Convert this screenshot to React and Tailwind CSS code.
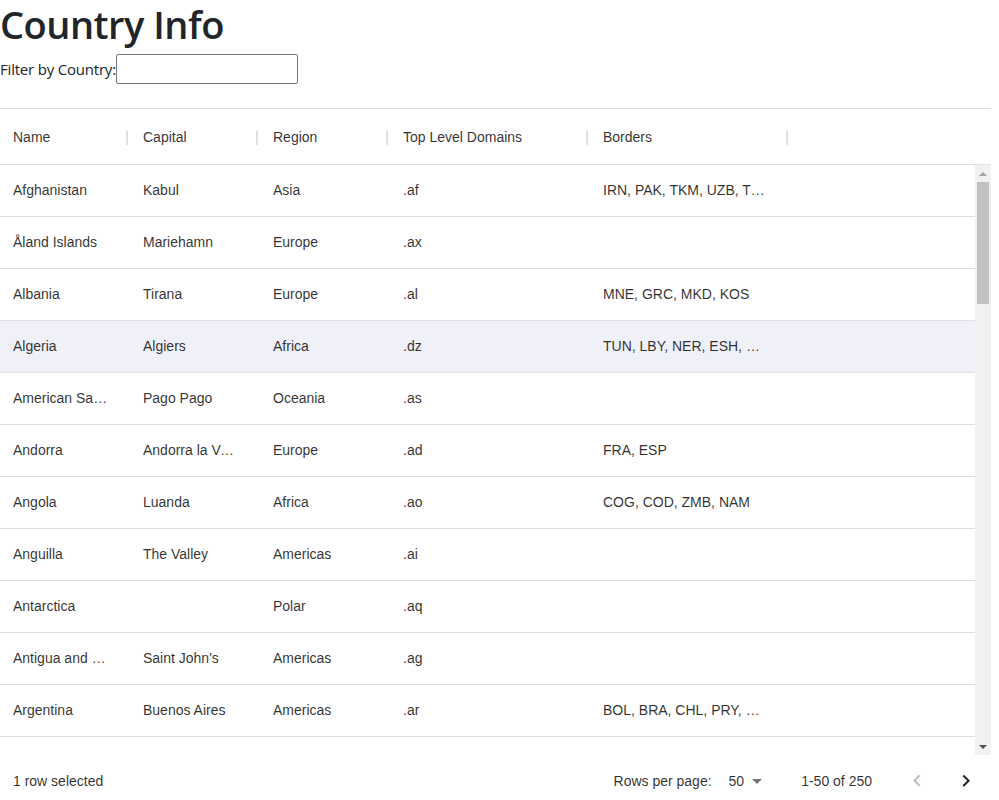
import { useState } from "react";

const COLUMNS = [
  { key: "name", label: "Name", width: "w-[130px]", pad: "pr-[20px]" },
  { key: "capital", label: "Capital", width: "w-[130px]", pad: "pr-[20px]" },
  { key: "region", label: "Region", width: "w-[130px]", pad: "pr-[20px]" },
  { key: "tld", label: "Top Level Domains", width: "w-[200px]", pad: "pr-[20px]" },
  { key: "borders", label: "Borders", width: "w-[200px]", pad: "pr-[22px]" },
];

const ROWS = [
  { name: "Afghanistan", capital: "Kabul", region: "Asia", tld: ".af", borders: "IRN, PAK, TKM, UZB, TJK, CHN" },
  { name: "Åland Islands", capital: "Mariehamn", region: "Europe", tld: ".ax", borders: "" },
  { name: "Albania", capital: "Tirana", region: "Europe", tld: ".al", borders: "MNE, GRC, MKD, KOS" },
  { name: "Algeria", capital: "Algiers", region: "Africa", tld: ".dz", borders: "TUN, LBY, NER, ESH, MRT, MLI, MAR" },
  { name: "American Samoa", capital: "Pago Pago", region: "Oceania", tld: ".as", borders: "" },
  { name: "Andorra", capital: "Andorra la Vella", region: "Europe", tld: ".ad", borders: "FRA, ESP" },
  { name: "Angola", capital: "Luanda", region: "Africa", tld: ".ao", borders: "COG, COD, ZMB, NAM" },
  { name: "Anguilla", capital: "The Valley", region: "Americas", tld: ".ai", borders: "" },
  { name: "Antarctica", capital: "", region: "Polar", tld: ".aq", borders: "" },
  { name: "Antigua and Barbuda", capital: "Saint John's", region: "Americas", tld: ".ag", borders: "" },
  { name: "Argentina", capital: "Buenos Aires", region: "Americas", tld: ".ar", borders: "BOL, BRA, CHL, PRY, URY" },
  { name: "Armenia", capital: "Yerevan", region: "Asia", tld: ".am", borders: "AZE, GEO, IRN, TUR" },
];

function Scrollbar() {
  return (
    <div className="flex w-[16px] shrink-0 flex-col bg-[#f1f1f1]">
      <div className="flex h-[17px] items-center justify-center">
        <div className="h-0 w-0 border-x-[4px] border-b-[4px] border-x-transparent border-b-[#a3a3a3]" />
      </div>
      <div className="mx-[2px] h-[122px] bg-[#c1c1c1]" />
      <div className="flex-1" />
      <div className="flex h-[17px] items-center justify-center">
        <div className="h-0 w-0 border-x-[4px] border-t-[4px] border-x-transparent border-t-[#505050]" />
      </div>
    </div>
  );
}

export default function App() {
  const [filter, setFilter] = useState("");
  const [selected, setSelected] = useState("Algeria");

  const rows = ROWS.filter(r => r.name.toLowerCase().includes(filter.toLowerCase()));

  return (
    <div className="w-[999px] bg-white text-[#212529]">
      {/* Header */}
      <h1 className="h-[48px] font-['Open_Sans',sans-serif] text-[38px] font-semibold leading-[48px] tracking-[-0.5px]">
        Country Info
      </h1>
      <div className="mt-[6px] flex h-[30px] items-center font-['Open_Sans',sans-serif] text-[15px]">
        <span className="tracking-[-0.2px]">Filter by Country:</span>
        <input
          value={filter}
          onChange={e => setFilter(e.target.value)}
          className="h-[30px] w-[182px] rounded-[2px] border border-[#767676] px-1 outline-none"
        />
      </div>

      {/* Data grid */}
      <div className="mt-[24px] w-[991px] border-t border-[#e0e0e0] font-['Liberation_Sans',Arial,sans-serif] text-[14px] text-[rgba(0,0,0,0.82)]">
        <div className="flex h-[56px] border-b border-[#e0e0e0] pt-[2px]">
          {COLUMNS.map(col => (
            <div key={col.key} className={`${col.width} flex items-center pl-[13px] pr-[2px]`}>
              <span className="flex-1 truncate">{col.label}</span>
              <span className="h-[14px] w-[2px] bg-[#e0e0e0]" />
            </div>
          ))}
        </div>

        <div className="flex h-[590px]">
          <div className="flex-1 overflow-hidden">
            {rows.map(row => (
              <div
                key={row.name}
                onClick={() => setSelected(row.name)}
                className={`flex h-[52px] items-center border-b border-[#e0e0e0] ${
                  selected === row.name ? "bg-[#f0f0f8]" : "bg-white"
                }`}
              >
                {COLUMNS.map(col => (
                  <div key={col.key} className={`${col.width} ${col.pad} truncate pl-[13px]`}>
                    {row[col.key]}
                  </div>
                ))}
              </div>
            ))}
          </div>
          <Scrollbar />
        </div>

        {/* Footer */}
        <div className="flex h-[52px] items-center pl-[13px]">
          <span>1 row selected</span>
          <div className="ml-auto flex items-center">
            <span>Rows per page:</span>
            <div className="ml-[17px] flex items-center">
              <span>50</span>
              <svg width="24" height="24" viewBox="0 0 24 24" className="ml-[1px] fill-[rgba(0,0,0,0.54)]">
                <path d="M7 10l5 5 5-5z" />
              </svg>
            </div>
            <span className="ml-[32px]">1-50 of 250</span>
            <div className="ml-[33px] flex items-center gap-[25px] pr-[13px]">
              <svg width="24" height="24" viewBox="0 0 24 24" className="fill-[rgba(0,0,0,0.26)]">
                <path d="M15.41 16.09l-4.58-4.59 4.58-4.59L14 5.5l-6 6 6 6z" />
              </svg>
              <svg width="24" height="24" viewBox="0 0 24 24" className="fill-[rgba(0,0,0,0.87)]">
                <path d="M8.59 16.34l4.58-4.59-4.58-4.59L10 5.75l6 6-6 6z" />
              </svg>
            </div>
          </div>
        </div>
      </div>
    </div>
  );
}
